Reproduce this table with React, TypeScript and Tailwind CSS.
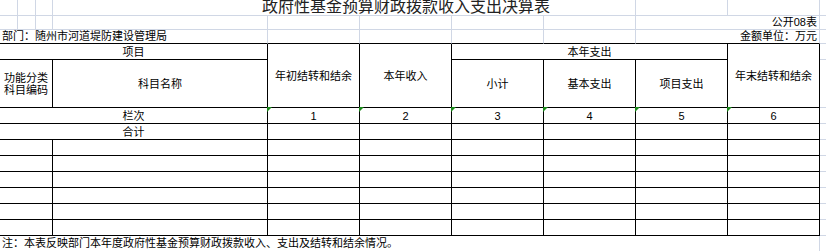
import type { ReactNode } from 'react';
import clsx from 'clsx';

// 表格单元格：黑色右/下边框
function Cell({ className, children }: { className?: string; children?: ReactNode }) {
  return (
    <div className={clsx('relative flex items-center justify-center border-r border-b border-black text-center leading-[12px]', className)}>
      {children}
    </div>
  );
}

// 表格右侧空白列（Excel 网格线）
function Edge({ className }: { className?: string }) {
  return <div className={clsx('border-b border-[#d0d7e5]', className)} />;
}

// 文本型数字的绿色角标
function Flag() {
  return (
    <svg className="absolute -left-px -top-px" width="5" height="5" viewBox="0 0 5 5">
      <polygon points="0,0 5,0 0,5" fill="#1b8a1b" />
    </svg>
  );
}

const cols = ['1', '2', '3', '4', '5', '6'];

export default function App() {
  return (
    <div className="w-[826px] h-[251px] overflow-hidden bg-white text-[11px] text-black font-['Liberation_Sans','Noto_Sans_CJK_SC',sans-serif]">
      {/* 标题行 */}
      <div className="flex h-[16px] border-b border-[#d0d7e5]">
        <div className="w-[18px] border-r border-[#d0d7e5]" />
        <div className="w-[18px] border-r border-[#d0d7e5]" />
        <div className="w-[17px] border-r border-[#d0d7e5]" />
        <div className="w-[583px] border-r border-[#d0d7e5] pl-[209px] overflow-visible whitespace-nowrap">
          <div className="-mt-[2px] text-[16px] leading-[18px] text-[#222]">政府性基金预算财政拨款收入支出决算表</div>
        </div>
        <div className="w-[92px] border-r border-[#d0d7e5]" />
        <div className="w-[92px] border-r border-[#d0d7e5]" />
        <div className="flex-1" />
      </div>

      {/* 表号 */}
      <div className="flex h-[14px] border-b border-[#d0d7e5]">
        <div className="w-[18px] border-r border-[#d0d7e5]" />
        <div className="w-[18px] border-r border-[#d0d7e5]" />
        <div className="w-[17px] border-r border-[#d0d7e5]" />
        <div className="w-[215px] border-r border-[#d0d7e5]" />
        <div className="w-[92px] border-r border-[#d0d7e5]" />
        <div className="w-[92px] border-r border-[#d0d7e5]" />
        <div className="w-[92px] border-r border-[#d0d7e5]" />
        <div className="w-[92px] border-r border-[#d0d7e5]" />
        <div className="w-[184px] border-r border-[#d0d7e5] flex items-end justify-end pr-[2px] leading-[13px]">公开08表</div>
        <div className="flex-1" />
      </div>

      {/* 部门 / 金额单位 */}
      <div className="flex h-[14px]">
        <div className="w-[268px] border-r border-b border-r-[#d0d7e5] border-b-black flex items-end pl-[2px] leading-[13px] whitespace-nowrap">
          部门：随州市河道堤防建设管理局
        </div>
        <div className="w-[92px] border-r border-b border-r-[#d0d7e5] border-b-black" />
        <div className="w-[92px] border-r border-b border-r-[#d0d7e5] border-b-black" />
        <div className="w-[92px] border-r border-b border-r-[#d0d7e5] border-b-black" />
        <div className="w-[92px] border-r border-b border-r-[#d0d7e5] border-b-black" />
        <div className="w-[184px] border-r border-b border-r-[#d0d7e5] border-b-black flex items-end justify-end pr-[2px] leading-[13px]">
          金额单位：万元
        </div>
        <div className="flex-1 border-b border-[#d0d7e5]" />
      </div>

      {/* 决算表主体 */}
      <div className="grid grid-cols-[53px_215px_92px_92px_92px_92px_92px_92px_1fr] grid-rows-[16px_48px_repeat(8,16px)]">
        <Cell className="col-span-2">项目</Cell>
        <Cell className="row-span-2">年初结转和结余</Cell>
        <Cell className="row-span-2">本年收入</Cell>
        <Cell className="col-span-3">本年支出</Cell>
        <Cell className="row-span-2">年末结转和结余</Cell>
        <Edge />

        <Cell>
          功能分类
          <br />
          科目编码
        </Cell>
        <Cell>科目名称</Cell>
        <Cell>小计</Cell>
        <Cell>基本支出</Cell>
        <Cell>项目支出</Cell>
        <Edge />

        <Cell className="col-span-2">栏次</Cell>
        {cols.map((n) => (
          <Cell key={n}>
            <Flag />
            {n}
          </Cell>
        ))}
        <Edge />

        <Cell className="col-span-2">合计</Cell>
        {cols.map((n) => (
          <Cell key={n} />
        ))}
        <Edge />

        {[0, 1, 2, 3, 4, 5].map((r) => (
          <div key={r} className="contents">
            <Cell />
            <Cell />
            {cols.map((n) => (
              <Cell key={n} />
            ))}
            <Edge />
          </div>
        ))}
      </div>

      {/* 注释 */}
      <div className="flex h-[15px]">
        <div className="w-[820px] border-r border-[#d0d7e5] flex items-center pl-[2px] whitespace-nowrap leading-[13px]">
          注：本表反映部门本年度政府性基金预算财政拨款收入、支出及结转和结余情况。
        </div>
        <div className="flex-1" />
      </div>
    </div>
  );
}
